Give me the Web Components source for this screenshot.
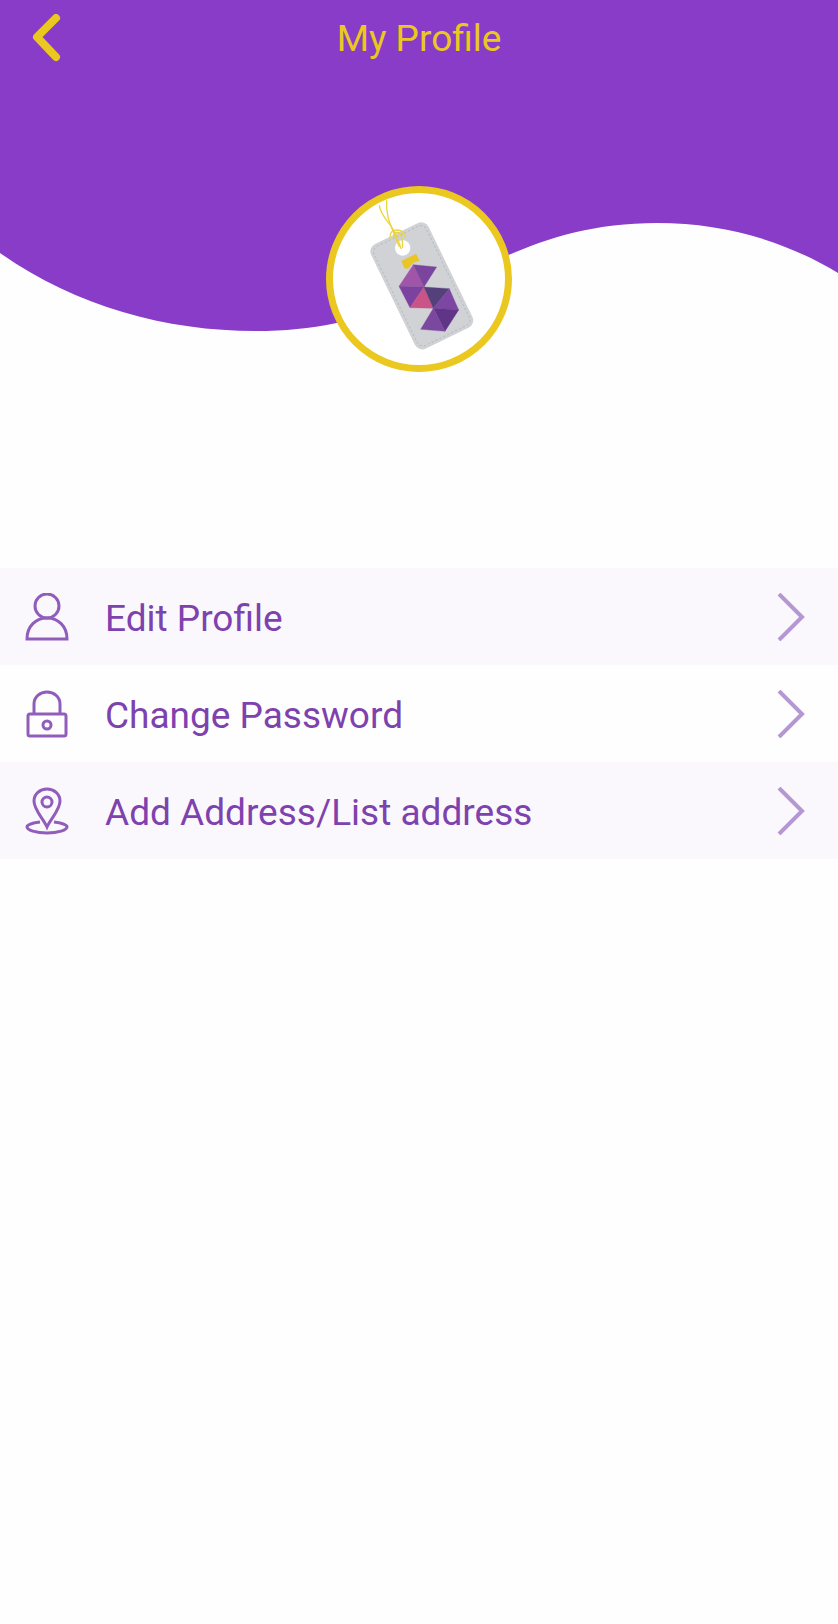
<!DOCTYPE html>
<html lang="en">
<head>
<meta charset="utf-8">
<meta name="viewport" content="width=device-width, initial-scale=1">
<title>My Profile</title>
<style>
  body {
    margin: 0;
    background: #fefefe;
    font-family: Roboto, "Liberation Sans", sans-serif;
  }
</style>
</head>
<body>
<profile-page>
  <profile-hero>
    <app-bar slot="bar">My Profile</app-bar>
    <profile-avatar></profile-avatar>
  </profile-hero>
  <profile-menu>
    <menu-row icon="user">Edit Profile</menu-row>
    <menu-row icon="lock">Change Password</menu-row>
    <menu-row icon="pin">Add Address/List address</menu-row>
  </profile-menu>
</profile-page>

<script>
class ProfilePage extends HTMLElement {
  constructor() {
    super();
    this.attachShadow({ mode: 'open' });
    this.shadowRoot.innerHTML = `
      <style>
        :host {
          display: flex;
          flex-direction: column;
          gap: 196px;
          min-height: 100vh;

          --brand: #883cc8;
          --accent: #ebc820;
          --text: #7e42ae;
          --row-alt: #faf8fc;
        }
      </style>
      <slot></slot>
    `;
  }
}

class ProfileHero extends HTMLElement {
  constructor() {
    super();
    this.attachShadow({ mode: 'open' });
    this.shadowRoot.innerHTML = `
      <style>
        :host {
          display: flex;
          flex-direction: column;
          align-items: center;
          gap: 108px;
          position: relative;
        }

        /* Wave sits behind the bar and the avatar */
        .wave {
          position: absolute;
          inset: 0;
          width: 100%;
          height: 331px;
          fill: var(--brand);
          z-index: -1;
        }
      </style>
      <svg class="wave" viewBox="0 0 838 331" preserveAspectRatio="none" aria-hidden="true">
        <path d="M0 0H838V273C785 241 725 223 657 223C488 223 437 331 256 331C165 331 75 306 0 253Z"/>
      </svg>
      <slot name="bar"></slot>
      <slot></slot>
    `;
  }
}

class AppBar extends HTMLElement {
  constructor() {
    super();
    this.attachShadow({ mode: 'open' });
    this.shadowRoot.innerHTML = `
      <style>
        :host {
          display: block;
          align-self: stretch;
          color: var(--accent);
        }

        header {
          display: grid;
          grid-template-columns: 64px 1fr 64px;
          align-items: center;
          height: 78px;
        }

        button {
          display: flex;
          justify-content: flex-end;
          padding: 0 0 2px;
          border: 0;
          background: none;
          color: inherit;
          cursor: pointer;
        }

        h1 {
          margin: 0;
          font-size: 37px;
          font-weight: 400;
          line-height: 44px;
          text-align: center;
        }
      </style>
      <header>
        <button type="button" aria-label="Back">
          <svg width="32" height="48" viewBox="0 0 32 48" fill="none" stroke="currentColor"
               stroke-width="8" stroke-linecap="round" stroke-linejoin="round">
            <path d="M24 4L5 23L24 43"/>
          </svg>
        </button>
        <h1><slot></slot></h1>
      </header>
    `;
  }
}

class ProfileAvatar extends HTMLElement {
  constructor() {
    super();
    this.attachShadow({ mode: 'open' });
    this.shadowRoot.innerHTML = `
      <style>
        :host {
          display: block;
          border: 7px solid var(--accent);
          border-radius: 50%;
          background: #fff;
          overflow: hidden;
        }

        svg {
          display: block;
          width: 172px;
          height: 172px;
        }
      </style>
      <svg viewBox="69 67 516 516" role="img" aria-label="Profile picture">
        <!-- tag -->
        <g transform="rotate(-26 336 347)">
          <rect x="240" y="171" width="192" height="349" rx="25" fill="#d0d2d5"/>
          <rect x="249" y="180" width="174" height="331" rx="18" fill="none"
                stroke="#b9bcbf" stroke-width="3" stroke-dasharray="7 6"/>
        </g>
        <circle cx="278" cy="232" r="23" fill="#fff"/>
        <!-- string -->
        <g fill="none" stroke="#ecd43c" stroke-width="4" stroke-linecap="round">
          <path d="M208 105C212 136 240 156 254 184C262 202 268 220 274 234"/>
          <path d="M230 90C228 128 236 150 250 184L268 228"/>
          <path d="M240 202C238 186 248 178 260 178C274 178 284 186 286 200"/>
          <path d="M250 202C250 188 258 182 268 186C278 194 278 212 278 230"/>
        </g>
        <path d="M274 271L318 249L329 270L310 276L294 294L283 293Z" fill="#e9c526"/>
        <!-- folded S -->
        <g stroke-width="1" stroke-linejoin="round">
          <path d="M310 282L267 347L342 349Z" fill="#a155a8" stroke="#a155a8"/>
          <path d="M310 282L380 289L342 349Z" fill="#7a469d" stroke="#7a469d"/>
          <path d="M267 347L342 349L300 411Z" fill="#7c429f" stroke="#7c429f"/>
          <path d="M342 349L370 413L300 411Z" fill="#ca5488" stroke="#ca5488"/>
          <path d="M342 349L418 354L370 413Z" fill="#54417b" stroke="#54417b"/>
          <path d="M418 354L446 418L370 413Z" fill="#7d46a2" stroke="#7d46a2"/>
          <path d="M370 413L446 418L405 482Z" fill="#603587" stroke="#603587"/>
          <path d="M370 413L405 482L332 476Z" fill="#7b48a0" stroke="#7b48a0"/>
        </g>
      </svg>
    `;
  }
}

class ProfileMenu extends HTMLElement {
  constructor() {
    super();
    this.attachShadow({ mode: 'open' });
    this.shadowRoot.innerHTML = `
      <style>
        :host { display: block; }
        nav { display: flex; flex-direction: column; }
        ::slotted(:nth-child(odd)) { background: var(--row-alt); }
      </style>
      <nav><slot></slot></nav>
    `;
  }
}

const ICONS = {
  user: `
    <circle cx="22" cy="13" r="12"/>
    <path d="M2 46C2 33 11 25 22 25S42 33 42 46Z"/>`,
  lock: `
    <rect x="3" y="24" width="38" height="22" rx="2"/>
    <path d="M9 23V14C9 7 15 2 22 2S35 7 35 14V23"/>
    <circle cx="22" cy="35" r="4"/>`,
  pin: `
    <path d="M22 40C18 31 9 23 9 14C9 7 15 2 22 2S35 7 35 14C35 23 26 31 22 40Z"/>
    <circle cx="22" cy="15" r="5"/>
    <path d="M15 35C7 36 2 38 2 40C2 43 11 46 22 46S42 43 42 40C42 38 37 36 29 35"/>`
};

class MenuRow extends HTMLElement {
  constructor() {
    super();
    this.attachShadow({ mode: 'open' });
  }

  connectedCallback() {
    this.shadowRoot.innerHTML = `
      <style>
        :host { display: block; }

        a {
          display: flex;
          align-items: center;
          height: 97px;
          padding: 0 33px 0 25px;
          color: var(--text);
          font-size: 37px;
          line-height: 44px;
          text-decoration: none;
        }

        svg {
          flex: none;
          fill: none;
          stroke: #915dbb;
          stroke-width: 3px;
        }

        .label {
          flex: 1;
          margin-left: 36px;
          padding-top: 4px;
        }

        .chevron {
          stroke: #b597d2;
          stroke-width: 4px;
        }
      </style>
      <a href="#${this.getAttribute('icon')}">
        <svg width="44" height="48" viewBox="0 0 44 48" aria-hidden="true">
          ${ICONS[this.getAttribute('icon')] || ''}
        </svg>
        <span class="label"><slot></slot></span>
        <svg class="chevron" width="28" height="48" viewBox="0 0 28 48" aria-hidden="true">
          <path d="M2 1L25 24L2 47"/>
        </svg>
      </a>
    `;
  }
}

customElements.define('profile-page', ProfilePage);
customElements.define('profile-hero', ProfileHero);
customElements.define('app-bar', AppBar);
customElements.define('profile-avatar', ProfileAvatar);
customElements.define('profile-menu', ProfileMenu);
customElements.define('menu-row', MenuRow);
</script>
</body>
</html>
